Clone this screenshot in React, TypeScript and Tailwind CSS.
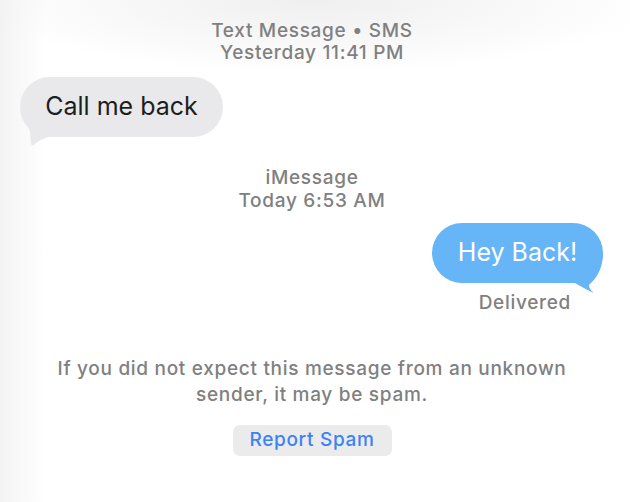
import React from 'react'

function GrayTail() {
  return (
    <svg className="absolute left-[-5px] top-[23px]" width="50" height="50" viewBox="0 0 50 50">
      <path
        d="M7 17 C11 24 15 28 15 33 L16 42 Q16 47 19 45 C23 41 28 38 35 37 L45 37 L45 10 Z"
        fill="#e9e9eb"
      />
    </svg>
  )
}

function BlueTail() {
  return (
    <svg className="absolute left-[128px] top-[28px]" width="46" height="46" viewBox="0 0 46 46">
      <path
        d="M0 32 L15 32 C22 36 29 40 34 42 C31 40 29 37 29 34 C36 28 43 18 43 2 L0 2 Z"
        fill="#66b5f6"
      />
    </svg>
  )
}

export default function App() {
  return (
    <div className="h-[502px] w-[630px] overflow-hidden bg-[radial-gradient(ellipse_340px_75px_at_50%_0%,#efefef,#ffffff00),linear-gradient(to_right,#f3f3f3,#ffffff_45px)] font-['Inter','Liberation_Sans',sans-serif]">
      <div className="flex flex-col pr-[6px] pt-[20px]">
        {/* SMS header */}
        <div className="text-center text-[19px] font-medium leading-[22px] tracking-[0.7px] text-[#808080]">
          <div>Text Message • SMS</div>
          <div>Yesterday 11:41 PM</div>
        </div>

        {/* incoming */}
        <div className="mt-[13px] pl-[20px]">
          <div className="relative w-[203px]">
            <GrayTail />
            <div className="relative flex h-[60px] items-center justify-center rounded-[30px] bg-[#e9e9eb] text-[25px] text-[#1d1d1f]">
              Call me back
            </div>
          </div>
        </div>

        {/* iMessage header */}
        <div className="mt-[29px] text-center text-[19px] font-medium leading-[23px] tracking-[0.7px] text-[#808080]">
          <div>iMessage</div>
          <div>Today 6:53 AM</div>
        </div>

        {/* outgoing */}
        <div className="mt-[11px] flex justify-end pr-[21px]">
          <div className="relative w-[171px]">
            <BlueTail />
            <div className="relative flex h-[60px] items-center justify-center rounded-[30px] bg-[#66b5f6] text-[25px] text-white">
              Hey Back!
            </div>
          </div>
        </div>
        <div className="mt-[9px] pr-[53px] text-right text-[19px] font-medium leading-[22px] tracking-[0.7px] text-[#808080]">
          Delivered
        </div>

        {/* spam notice */}
        <div className="mt-[42px] text-center text-[19px] font-medium leading-[26px] tracking-[0.7px] text-[#808080]">
          If you did not expect this message from an unknown
          <br />
          sender, it may be spam.
        </div>
        <div className="mt-[17px] flex justify-center">
          <button className="h-[31px] w-[159px] rounded-[7px] bg-[#ebebeb] text-[19px] font-medium tracking-[0.7px] text-[#3a82f7]">
            Report Spam
          </button>
        </div>
      </div>
    </div>
  )
}
